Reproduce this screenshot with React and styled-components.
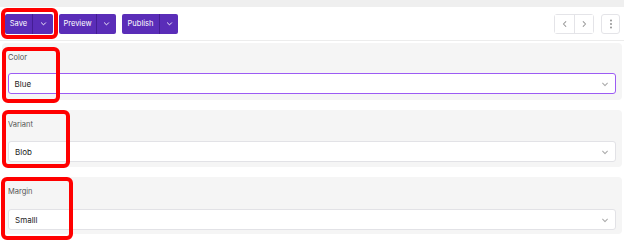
import React from 'react';
import styled, { createGlobalStyle } from 'styled-components';

const GlobalStyle = createGlobalStyle`
  html, body {
    margin: 0;
    padding: 0;
    background: #fff;
    font-family: Inter, "Liberation Sans", sans-serif;
  }
`;

const Root = styled.div`
  position: relative;
  width: 624px;
  height: 248px;
  overflow: hidden;
  background: #fff;
`;

const TopStrip = styled.div`
  height: 7px;
  background: #efefef;
`;

const Toolbar = styled.div`
  align-items: center;
  border-bottom: 1px solid #ececec;
  box-sizing: border-box;
  display: flex;
  height: 34px;
  justify-content: space-between;
  padding: 0 4px 0 5px;
`;

const Group = styled.div`
  align-items: center;
  display: flex;
  gap: ${props => props.gap || 6}px;
`;

const SplitButton = styled.div`
  background: #5a2db8;
  border-radius: 2px;
  color: #fff;
  display: flex;
  height: 20px;
`;

const MainPart = styled.button`
  align-items: center;
  background: none;
  border: 0;
  border-right: 1px solid rgba(30, 0, 80, 0.35);
  color: #fff;
  display: flex;
  font-family: inherit;
  font-size: 7.5px;
  font-weight: 400;
  justify-content: center;
  padding: 0;
  width: ${props => props.w}px;
`;

const CaretPart = styled.button`
  align-items: center;
  background: none;
  border: 0;
  display: flex;
  justify-content: center;
  padding: 0;
  width: ${props => props.w || 19}px;
`;

const NavGroup = styled.div`
  border: 1px solid #e4e4e8;
  border-radius: 3px;
  box-sizing: border-box;
  display: flex;
  height: 20px;
`;

const NavCell = styled.button`
  align-items: center;
  background: #fff;
  border: 0;
  border-left: ${props => (props.divided ? '1px solid #e4e4e8' : '0')};
  display: flex;
  justify-content: center;
  padding: 0;
  width: 19px;
`;

const MenuButton = styled.button`
  align-items: center;
  background: #fff;
  border: 1px solid #e4e4e8;
  border-radius: 3px;
  box-sizing: border-box;
  display: flex;
  height: 20px;
  justify-content: center;
  padding: 0;
  width: 19px;
`;

const Fields = styled.div`
  display: flex;
  flex-direction: column;
  gap: 10px;
  margin: 2px 2px 0;
`;

const Panel = styled.div`
  background: #f5f5f5;
  border-radius: 4px;
  box-sizing: border-box;
  height: 57px;
  padding: 10px 6px 5px;
`;

const Label = styled.div`
  color: #555;
  font-size: 7.5px;
  height: 10px;
  line-height: 10px;
  margin-bottom: ${props => props.gap || 10}px;
`;

const Select = styled.div`
  align-items: center;
  background: #fff;
  border: ${props => (props.focused ? '1.5px solid #9c5cf4' : '1px solid #e2e2e6')};
  border-radius: 3px;
  box-sizing: border-box;
  color: #222;
  display: flex;
  font-size: 8px;
  height: 21px;
  justify-content: space-between;
  padding: 0 6px 0 ${props => (props.focused ? 5.5 : 6)}px;
`;

const Marker = styled.div`
  border: 4px solid #ff0000;
  border-radius: 6px;
  box-sizing: border-box;
  position: absolute;
  pointer-events: none;
`;

const Chevron = ({ color = '#fff', size = 7, dir = 'down' }) => {
  const paths = {
    down: 'M2 4l3 3 3-3',
    left: 'M6 2L3 5l3 3',
    right: 'M4 2l3 3-3 3',
  };
  return (
    <svg width={size} height={size} viewBox="0 0 10 10" fill="none">
      <path d={paths[dir]} stroke={color} strokeWidth="1.3" strokeLinecap="round" strokeLinejoin="round" />
    </svg>
  );
};

const Kebab = () => (
  <svg width="4" height="10" viewBox="0 0 4 10">
    <circle cx="2" cy="1.5" r="0.9" fill="#888" />
    <circle cx="2" cy="5" r="0.9" fill="#888" />
    <circle cx="2" cy="8.5" r="0.9" fill="#888" />
  </svg>
);

const actions = [
  { label: 'Save', w: 28, cw: 20 },
  { label: 'Preview', w: 38, cw: 19 },
  { label: 'Publish', w: 38, cw: 18 },
];

const fields = [
  { label: 'Color', value: 'Blue', focused: true, gap: 10 },
  { label: 'Variant', value: 'Blob', gap: 11 },
  { label: 'Margin', value: 'Smalll', gap: 12 },
];

const markers = [
  { left: 1, top: 8, width: 57, height: 31 },
  { left: 2, top: 47, width: 58, height: 56 },
  { left: 2, top: 110, width: 68, height: 58 },
  { left: 1, top: 177, width: 72, height: 63 },
];

export default function App() {
  return (
    <Root>
      <GlobalStyle />
      <TopStrip />
      <Toolbar>
        <Group gap={6}>
          {actions.map(a => (
            <SplitButton key={a.label}>
              <MainPart w={a.w}>{a.label}</MainPart>
              <CaretPart w={a.cw}><Chevron /></CaretPart>
            </SplitButton>
          ))}
        </Group>
        <Group gap={7}>
          <NavGroup>
            <NavCell><Chevron dir="left" color="#999" size={8} /></NavCell>
            <NavCell divided><Chevron dir="right" color="#999" size={8} /></NavCell>
          </NavGroup>
          <MenuButton><Kebab /></MenuButton>
        </Group>
      </Toolbar>
      <Fields>
        {fields.map(f => (
          <Panel key={f.label}>
            <Label gap={f.gap}>{f.label}</Label>
            <Select focused={f.focused}>
              <span>{f.value}</span>
              <Chevron color="#aaa" size={8} />
            </Select>
          </Panel>
        ))}
      </Fields>
      {markers.map((m, i) => (
        <Marker key={i} style={m} />
      ))}
    </Root>
  );
}
